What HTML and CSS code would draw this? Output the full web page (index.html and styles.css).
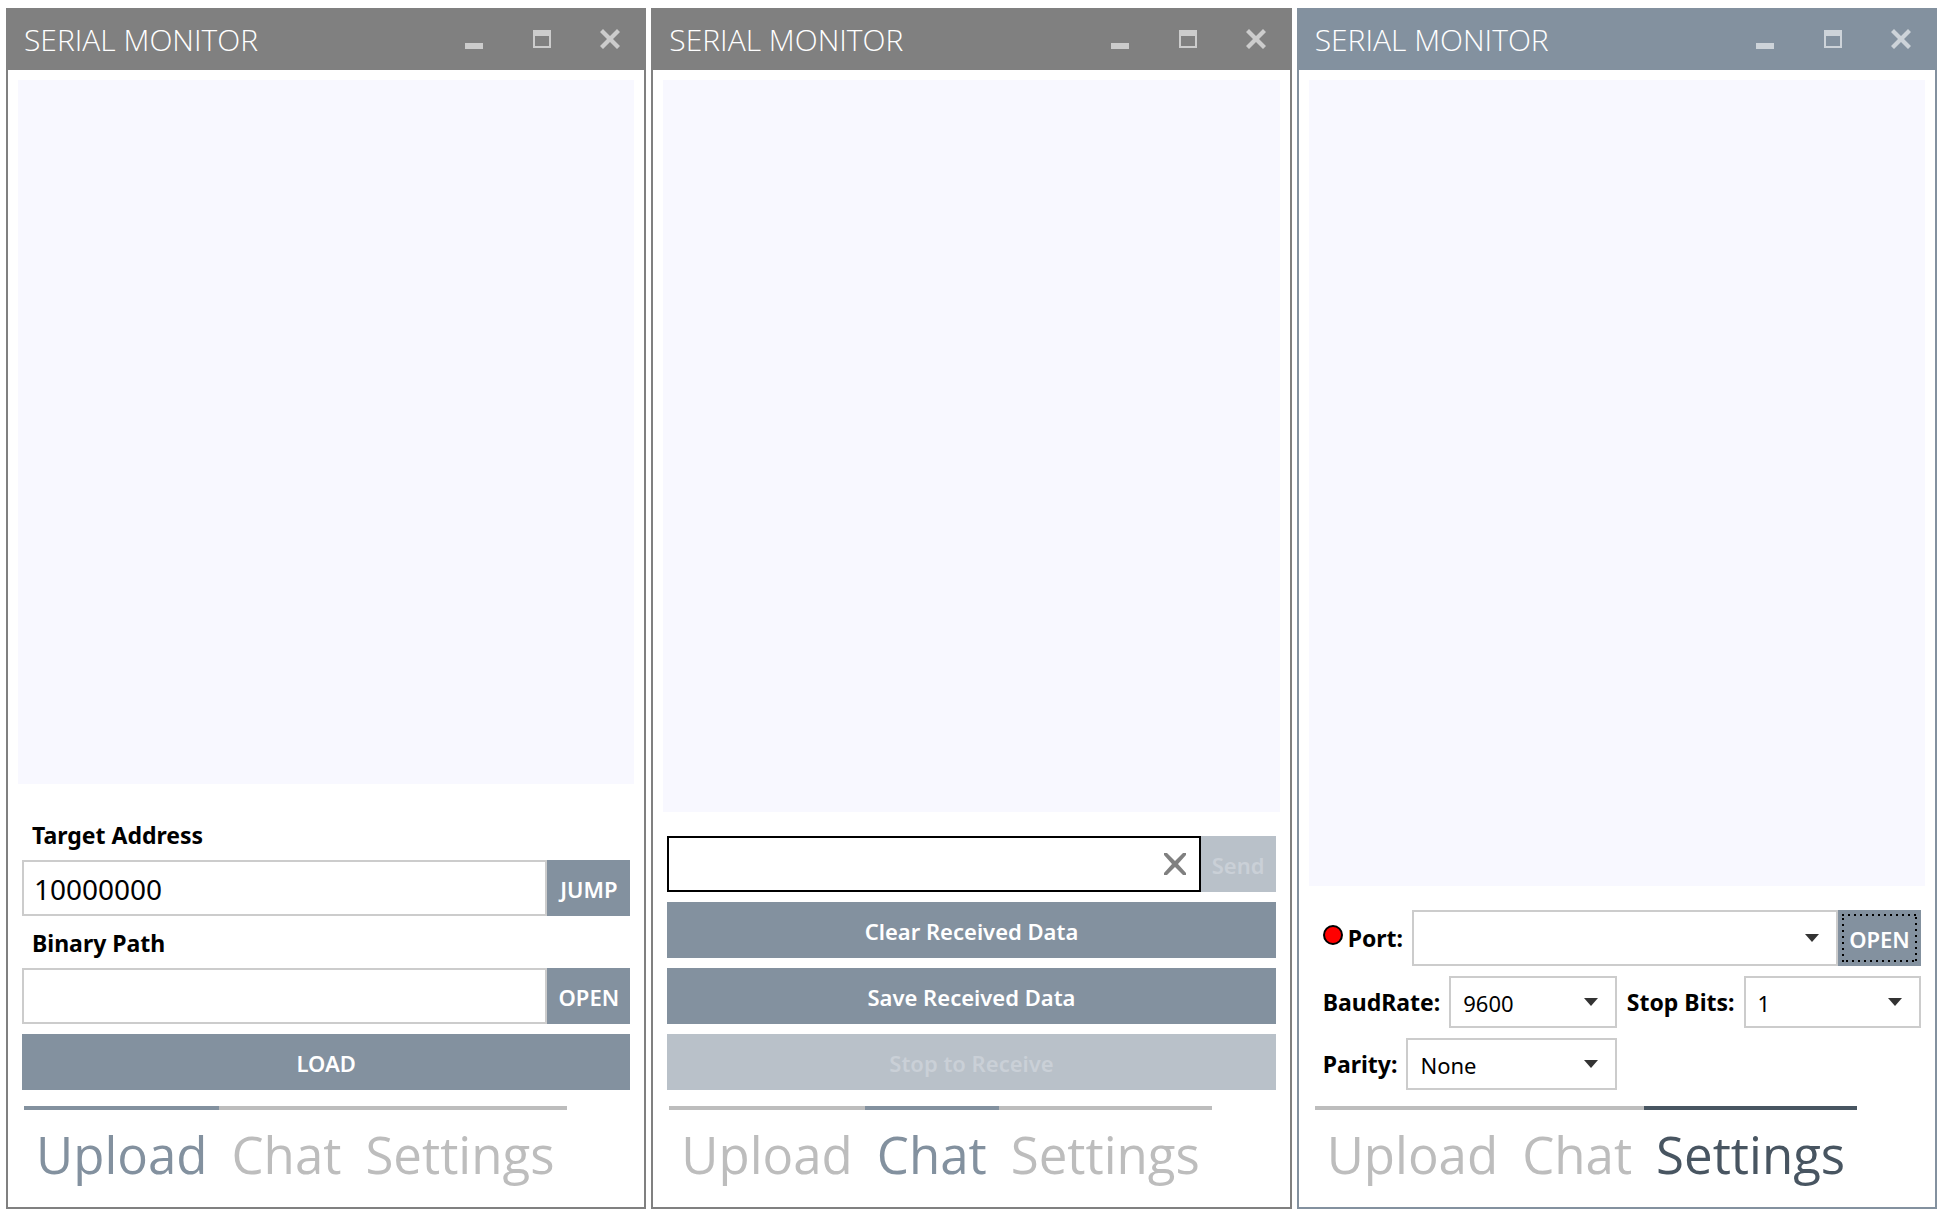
FILE: index.html
```html
<!DOCTYPE html>
<html lang="en">
<head>
<meta charset="utf-8">
<title>Serial Monitor</title>
<link rel="stylesheet" href="styles.css">
</head>
<body>
<svg class="defs" aria-hidden="true">
  <symbol id="minimize" viewBox="0 0 20 20"><path d="M1 14h18v6H1z"/></symbol>
  <symbol id="maximize" viewBox="0 0 20 20"><path fill-rule="evenodd" d="M1 1h18v18H1zM3 7v10h14V7z"/></symbol>
  <symbol id="close" viewBox="0 0 20 20"><path d="M3 0l7 7 7-7 3 3-7 7 7 7-3 3-7-7-7 7-3-3 7-7-7-7z"/></symbol>
  <symbol id="clear" viewBox="0 0 22 22"><path d="M0 2V0h3l8 8 8-8h3v2l-8 9 8 9v2h-3l-8-8-8 8H0v-2l8-9z"/></symbol>
  <symbol id="arrow" viewBox="0 0 14 8"><path d="M0 0h14l-7 8z"/></symbol>
</svg>
<main class="desktop">

  <section class="window">
    <header class="titlebar">
      <h1 class="title">SERIAL MONITOR</h1>
      <button class="caption" aria-label="Minimize"><svg><use href="#minimize"/></svg></button>
      <button class="caption" aria-label="Maximize"><svg><use href="#maximize"/></svg></button>
      <button class="caption" aria-label="Close"><svg><use href="#close"/></svg></button>
    </header>
    <div class="log"></div>
    <form class="panel">
      <label class="heading" for="address">Target Address</label>
      <div class="row">
        <input class="text" id="address" type="text" value="10000000">
        <button class="button side" type="button">JUMP</button>
      </div>
      <label class="heading" for="path">Binary Path</label>
      <div class="row">
        <input class="text" id="path" type="text">
        <button class="button side" type="button">OPEN</button>
      </div>
      <button class="button wide" type="button">LOAD</button>
    </form>
    <nav class="tabs">
      <a class="tab active" href="#upload">Upload</a>
      <a class="tab" href="#chat">Chat</a>
      <a class="tab" href="#settings">Settings</a>
    </nav>
  </section>

  <section class="window">
    <header class="titlebar">
      <h1 class="title">SERIAL MONITOR</h1>
      <button class="caption" aria-label="Minimize"><svg><use href="#minimize"/></svg></button>
      <button class="caption" aria-label="Maximize"><svg><use href="#maximize"/></svg></button>
      <button class="caption" aria-label="Close"><svg><use href="#close"/></svg></button>
    </header>
    <div class="log"></div>
    <form class="panel">
      <div class="row">
        <div class="clearable">
          <input class="text current" type="text" aria-label="Message">
          <button class="clear" type="button" aria-label="Clear message"><svg><use href="#clear"/></svg></button>
        </div>
        <button class="button send" type="button" disabled>Send</button>
      </div>
      <button class="button wide" type="button">Clear Received Data</button>
      <button class="button wide" type="button">Save Received Data</button>
      <button class="button wide" type="button" disabled>Stop to Receive</button>
    </form>
    <nav class="tabs">
      <a class="tab" href="#upload">Upload</a>
      <a class="tab active" href="#chat">Chat</a>
      <a class="tab" href="#settings">Settings</a>
    </nav>
  </section>

  <section class="window focused">
    <header class="titlebar">
      <h1 class="title">SERIAL MONITOR</h1>
      <button class="caption" aria-label="Minimize"><svg><use href="#minimize"/></svg></button>
      <button class="caption" aria-label="Maximize"><svg><use href="#maximize"/></svg></button>
      <button class="caption" aria-label="Close"><svg><use href="#close"/></svg></button>
    </header>
    <div class="log"></div>
    <form class="panel">
      <div class="row">
        <label class="caption-label" for="port"><span class="status"></span>Port:</label>
        <div class="picker tall">
          <select id="port"><option></option></select>
          <svg class="arrow"><use href="#arrow"/></svg>
        </div>
        <button class="button side" type="button">OPEN<svg class="focus-ring"><rect width="100%" height="100%"/></svg></button>
      </div>
      <div class="fields">
        <div class="field">
          <label class="caption-label" for="baud">BaudRate:</label>
          <div class="picker">
            <select id="baud"><option>9600</option></select>
            <svg class="arrow"><use href="#arrow"/></svg>
          </div>
        </div>
        <div class="field">
          <label class="caption-label" for="stop">Stop Bits:</label>
          <div class="picker">
            <select id="stop"><option>1</option></select>
            <svg class="arrow"><use href="#arrow"/></svg>
          </div>
        </div>
        <div class="field">
          <label class="caption-label" for="parity">Parity:</label>
          <div class="picker">
            <select id="parity"><option>None</option></select>
            <svg class="arrow"><use href="#arrow"/></svg>
          </div>
        </div>
      </div>
    </form>
    <nav class="tabs">
      <a class="tab" href="#upload">Upload</a>
      <a class="tab" href="#chat">Chat</a>
      <a class="tab active" href="#settings">Settings</a>
    </nav>
  </section>

</main>
</body>
</html>
```
FILE: styles.css
```css
* {
  box-sizing: border-box;
}

body {
  margin: 0;
  background: #fff;
  color: #000;
  font-family: "Noto Sans", "Open Sans", sans-serif;
  font-size: 22px;
}

button,
input,
select {
  margin: 0;
  padding: 0;
  border: 0;
  border-radius: 0;
  color: inherit;
  font: inherit;
}

.defs {
  display: none;
}

.desktop {
  display: grid;
  grid-template-columns: repeat(3, 1fr);
  gap: 5px;
  min-height: 100vh;
  padding: 8px 7px 7px 6px;
}

.window {
  --frame: #808080;
  --glyph: #ccc;
  --highlight: #83919f;
  display: flex;
  flex-direction: column;
  min-width: 0;
  border: 2px solid var(--frame);
  border-top: 0;
}

.window.focused {
  --frame: #83919f;
  --glyph: #cdd3d9;
  --highlight: #485561;
}

.titlebar {
  display: flex;
  height: 62px;
  background: var(--frame);
}

.title {
  flex: 1;
  margin: 0;
  padding: 2px 0 0 16px;
  color: #fff;
  font-family: "Open Sans", sans-serif;
  font-size: 30px;
  font-weight: 300;
  line-height: 60px;
  white-space: nowrap;
}

.caption {
  display: grid;
  place-items: center;
  width: 68px;
  background: none;
}

.caption svg {
  width: 20px;
  height: 20px;
  fill: var(--glyph);
}

.log {
  flex: 1;
  margin: 10px 10px 0;
  background: #f8f8ff;
}

.panel {
  display: flex;
  flex-direction: column;
  padding: 24px 14px 16px;
}

.heading {
  padding: 10px 10px 8px;
  font-size: 23px;
  font-weight: 700;
  line-height: 34px;
}

.row {
  display: flex;
}

.text {
  flex: 1;
  width: 100%;
  min-width: 0;
  height: 56px;
  padding: 2px 10px 0;
  border: 2px solid #ccc;
  background: #fff;
  font-size: 28px;
}

.text.current {
  padding-right: 48px;
  border-color: #000;
}

.clearable {
  position: relative;
  flex: 1;
}

.clear {
  position: absolute;
  top: 2px;
  right: 2px;
  display: grid;
  place-items: center;
  width: 48px;
  height: 52px;
  background: none;
}

.clear svg {
  width: 22px;
  height: 22px;
  fill: #808080;
}

.button {
  height: 56px;
  padding-top: 2px;
  background: #83919f;
  color: #fff;
  font-weight: 600;
}

.button:disabled {
  background: #b9c1c9;
  color: #cad0d7;
}

.side {
  position: relative;
  width: 83px;
}

.send {
  width: 75px;
}

.wide {
  margin-top: 10px;
}

.focus-ring {
  position: absolute;
  inset: 4px;
  width: calc(100% - 8px);
  height: calc(100% - 8px);
  fill: none;
  stroke: #000;
  stroke-width: 4px;
  stroke-dasharray: 2 4;
}

.fields {
  display: grid;
  grid-template-columns: 1fr 1fr;
  row-gap: 10px;
  margin-top: 10px;
}

.field {
  display: flex;
}

.caption-label {
  display: flex;
  align-items: center;
  gap: 5px;
  padding: 0 9px 0 10px;
  font-size: 23px;
  font-weight: 700;
  white-space: nowrap;
}

.status {
  width: 20px;
  height: 20px;
  margin-bottom: 6px;
  border: 2px solid #000;
  border-radius: 50%;
  background: #f00;
}

.picker {
  position: relative;
  flex: 1;
  height: 52px;
}

.picker.tall {
  height: 56px;
}

.picker select {
  width: 100%;
  height: 100%;
  padding: 2px 40px 0 12px;
  border: 2px solid #ccc;
  background: #fff;
  appearance: none;
}

.arrow {
  position: absolute;
  top: calc(50% - 4px);
  right: 19px;
  width: 14px;
  height: 8px;
  fill: #333;
  pointer-events: none;
}

.tabs {
  display: flex;
  padding: 0 16px;
}

.tab {
  padding: 0 12px 8px;
  border-top: 4px solid #bdbdbd;
  color: #bdbdbd;
  font-family: "Open Sans", sans-serif;
  font-size: 51px;
  line-height: 89px;
  text-decoration: none;
}

.tab.active {
  border-color: var(--highlight);
  color: var(--highlight);
}
```
